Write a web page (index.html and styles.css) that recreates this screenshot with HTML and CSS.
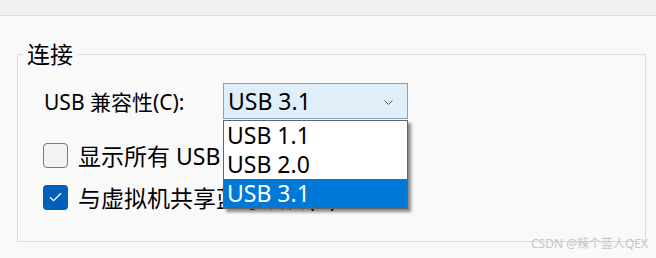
FILE: index.html
```html
<!DOCTYPE html>
<html lang="zh-CN">

<head>
	<meta charset="UTF-8">
	<meta name="viewport" content="width=device-width, initial-scale=1.0">
	<title>USB 控制器</title>
	<link rel="stylesheet" href="styles.css">
</head>

<body>
	<div class="topBar"></div>
	<fieldset class="group">
		<legend>连接</legend>
		<div class="row first">
			<label class="fieldLabel">USB 兼容性(C):</label>
			<div class="combo">
				<div class="comboBox">
					<span>USB 3.1</span>
					<svg class="chevron" width="9" height="5" viewBox="0 0 9 5">
						<path d="M0.5 0.5 L4.5 4.5 L8.5 0.5" fill="none" stroke="#5f5f5f" stroke-width="1"/>
					</svg>
				</div>
				<ul class="comboList">
					<li>USB 1.1</li>
					<li>USB 2.0</li>
					<li class="selected">USB 3.1</li>
				</ul>
			</div>
		</div>
		<div class="row second">
			<span class="check"></span>
			<span class="checkText">显示所有 USB 输入设备(S)</span>
		</div>
		<div class="row third">
			<span class="check checked">
				<svg width="13" height="10" viewBox="0 0 13 10">
					<path d="M1 5.2 L4.6 8.6 L12 1.2" fill="none" stroke="#fff" stroke-width="1.3"/>
				</svg>
			</span>
			<span class="checkText">与虚拟机共享蓝牙设备(B)</span>
		</div>
	</fieldset>
	<div class="watermark">CSDN @辣个蓝人QEX</div>
</body>

</html>
```

FILE: styles.css
```css
body {
	margin: 0;
	height: 258px;
	position: relative;
	overflow: hidden;
	background-color: #f9f9f9;
	color: #000;
	font-family: "Noto Sans", "Noto Sans CJK SC", sans-serif;
}

.topBar {
	height: 15px;
	background-color: #f0f0f0;
	border-bottom: 1px solid #dedede;
}

.group {
	margin: 26px 10px 0 17px;
	padding: 17px 0 26px 0;
	border: 1px solid #dcdcdc;
	min-width: 0;
}

.group legend {
	margin-left: 5px;
	padding: 0 4px;
	font-size: 23px;
	line-height: 24px;
}

.row {
	display: flex;
	align-items: center;
	height: 36px;
	padding-left: 25px;
}

.second {
	margin-top: 18px;
}

.third {
	margin-top: 6px;
}

.fieldLabel {
	width: 179px;
	padding-left: 1px;
	font-size: 21px;
	white-space: nowrap;
}

.combo {
	position: relative;
}

.comboBox {
	display: flex;
	align-items: center;
	box-sizing: border-box;
	width: 185px;
	height: 36px;
	padding: 0 14px 0 4px;
	background-color: #e0eef9;
	border: 1px solid #7da2ce;
	font-size: 23px;
}

.chevron {
	margin-left: auto;
	margin-top: 3px;
}

.comboList {
	position: absolute;
	top: 37px;
	left: 0;
	z-index: 2;
	width: 185px;
	box-sizing: border-box;
	margin: 0;
	padding: 0;
	list-style: none;
	background-color: #fff;
	border: 1px solid #646464;
	box-shadow: 3px 3px 3px rgba(0, 0, 0, 0.45);
	font-size: 23px;
}

.comboList li {
	height: 29px;
	line-height: 29px;
	padding-left: 3px;
}

.comboList .selected {
	background-color: #0078d7;
	color: #fff;
}

.check {
	display: flex;
	align-items: center;
	justify-content: center;
	box-sizing: border-box;
	width: 25px;
	height: 25px;
	margin-right: 10px;
	border: 1.5px solid #7a7a7a;
	border-radius: 4px;
	background-color: #f3f3f3;
}

.check.checked {
	border: none;
	background-color: #005fb8;
}

.checkText {
	font-size: 23px;
	white-space: nowrap;
}

.watermark {
	position: absolute;
	right: 8px;
	bottom: 6px;
	font-size: 12px;
	color: #c6c6c6;
}
```
